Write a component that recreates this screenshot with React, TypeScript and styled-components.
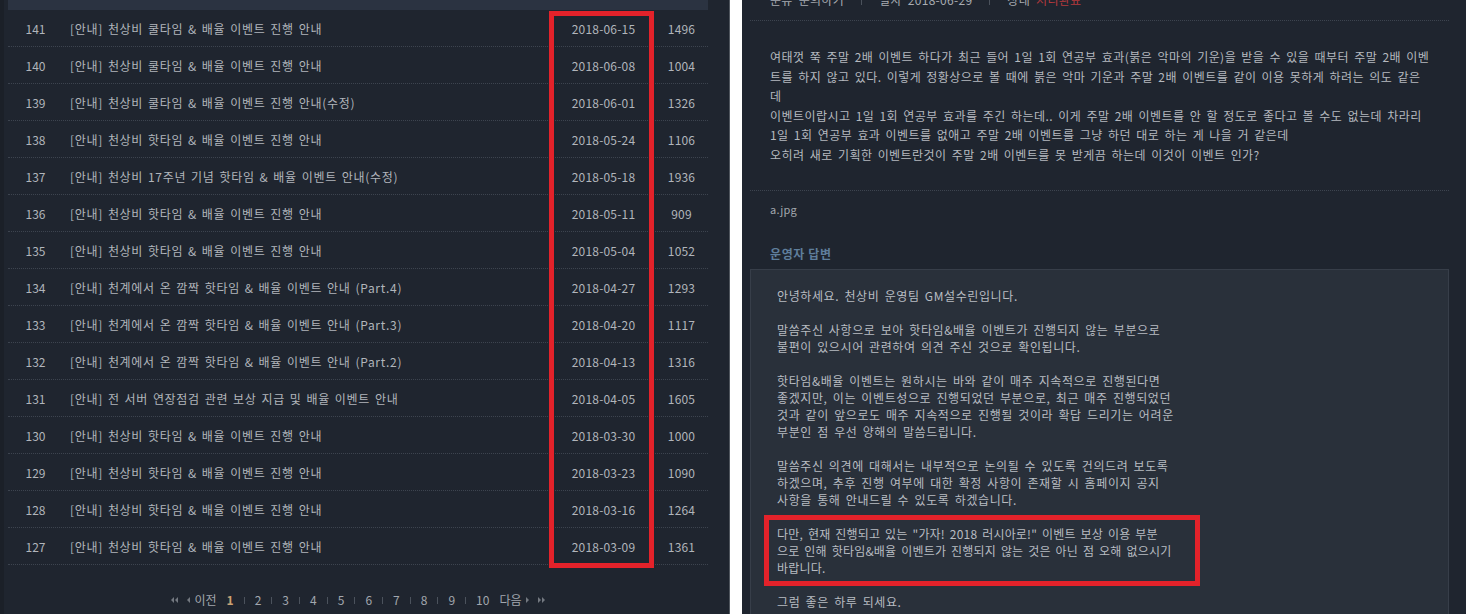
import React from "react";
import styled, { createGlobalStyle } from "styled-components";

const GlobalStyle = createGlobalStyle`
  html, body { margin: 0; padding: 0; background: #ffffff; overflow: hidden; }
  body { font-family: "Noto Sans CJK KR", "Noto Sans", sans-serif; }
  * { box-sizing: border-box; }
`;

const Page = styled.div`
  display: flex;
  gap: 12px;
  height: 614px;
  overflow: hidden;
`;

const ListPanel = styled.section`
  width: 730px;
  flex: none;
  background: #1f252f;
  border-left: 4px solid #1b2028;
  border-right: 1px solid #50565e;
  padding: 0 21px 0 4px;
  display: flex;
  flex-direction: column;
  & > * { flex-shrink: 0; }
`;

const TableWrap = styled.div`
  position: relative;
`;

const HeadBar = styled.div`
  height: 10px;
  background: #2b3341;
`;

const Row = styled.div`
  display: grid;
  grid-template-columns: 55px 489px 103px 53px;
  align-items: center;
  height: 37px;
  border-bottom: 1px dotted #3d444f;
  font-size: 12px;
  color: #b1b5bb;
`;

const Num = styled.span`
  text-align: center;
`;

const Title = styled.span`
  padding-left: 7px;
  white-space: nowrap;
  letter-spacing: 0.7px;
  word-spacing: 1.5px;
`;

const Center = styled.span`
  text-align: center;
  letter-spacing: 0.2px;
`;

const DateMark = styled.div`
  position: absolute;
  left: 541px;
  top: 11px;
  width: 105px;
  height: 557px;
  border: 5px solid #e3222a;
  pointer-events: none;
`;

const Pager = styled.nav`
  display: flex;
  justify-content: center;
  align-items: center;
  gap: 9px;
  padding-top: 28px;
  font-size: 12px;
  line-height: 14px;
  color: #a2a7ae;
`;

const PageNum = styled.span<{ $active?: boolean }>`
  color: ${(p) => (p.$active ? "#c9a274" : "#a2a7ae")};
  font-weight: ${(p) => (p.$active ? 700 : 400)};
  padding: 0 1px;
`;

const PagerSep = styled.span`
  width: 1px;
  height: 7px;
  background: #4b525c;
`;

const PagerLink = styled.span`
  display: inline-flex;
  align-items: center;
  gap: 5px;
`;

const ArrowIcon = styled.svg`
  display: block;
  fill: #737880;
`;

const PostPanel = styled.section`
  flex: 1;
  background: #1f252f;
  padding: 0 17px 0 8px;
  min-width: 0;
  overflow: hidden;
`;

const MetaRow = styled.div`
  margin-top: -7px;
  height: 28px;
  display: flex;
  align-items: flex-start;
  padding-left: 20px;
  font-size: 12px;
  line-height: 14px;
  color: #a8acb2;
  border-bottom: 1px dotted #3d444f;
  gap: 17px;
  letter-spacing: 0.3px;
`;

const MetaItem = styled.span`
  display: inline-flex;
  gap: 6px;
  white-space: nowrap;
`;

const MetaValue = styled.span<{ $alert?: boolean }>`
  color: ${(p) => (p.$alert ? "#b4393d" : "#a8acb2")};
`;

const MetaSep = styled.span`
  width: 1px;
  height: 12px;
  background: #4b525c;
`;

const QuestionBody = styled.div`
  padding: 26px 0 25px 20px;
  font-size: 12px;
  line-height: 19.6px;
  color: #b5b9bf;
  border-bottom: 1px dotted #3d444f;
  letter-spacing: 0.45px;
  word-spacing: 2.1px;
`;

const Line = styled.div`
  white-space: nowrap;
`;

const Attachment = styled.div`
  padding: 11px 0 0 20px;
  font-size: 11px;
  line-height: 14px;
  color: #a3a8ae;
  letter-spacing: 0.3px;
`;

const AnswerHeading = styled.h3`
  margin: 0;
  padding: 31px 0 0 20px;
  height: 53px;
  font-size: 12px;
  line-height: 14px;
  font-weight: 700;
  color: #5f7e9c;
  letter-spacing: 0.6px;
`;

const AnswerBox = styled.div`
  background: #29303a;
  border: 1px solid #373e49;
  border-bottom: none;
  padding: 17px 0 40px 26px;
  font-size: 12px;
  line-height: 17px;
  color: #b8bcc2;
  letter-spacing: 0.6px;
  word-spacing: 2px;
`;

const Para = styled.p`
  margin: 0 0 17px;
`;

const HighlightPara = styled.p`
  width: 436px;
  margin: -9.5px 0 6.5px -13px;
  padding: 4.5px 8px 5.5px 8px;
  border: 5px solid #e3222a;
  letter-spacing: 0.2px;
`;

type Post = [number, string, string, number];

const posts: Post[] = [
  [141, "[안내] 천상비 쿨타임 & 배율 이벤트 진행 안내", "2018-06-15", 1496],
  [140, "[안내] 천상비 쿨타임 & 배율 이벤트 진행 안내", "2018-06-08", 1004],
  [139, "[안내] 천상비 쿨타임 & 배율 이벤트 진행 안내(수정)", "2018-06-01", 1326],
  [138, "[안내] 천상비 핫타임 & 배율 이벤트 진행 안내", "2018-05-24", 1106],
  [137, "[안내] 천상비 17주년 기념 핫타임 & 배율 이벤트 안내(수정)", "2018-05-18", 1936],
  [136, "[안내] 천상비 핫타임 & 배율 이벤트 진행 안내", "2018-05-11", 909],
  [135, "[안내] 천상비 핫타임 & 배율 이벤트 진행 안내", "2018-05-04", 1052],
  [134, "[안내] 천계에서 온 깜짝 핫타임 & 배율 이벤트 안내 (Part.4)", "2018-04-27", 1293],
  [133, "[안내] 천계에서 온 깜짝 핫타임 & 배율 이벤트 안내 (Part.3)", "2018-04-20", 1117],
  [132, "[안내] 천계에서 온 깜짝 핫타임 & 배율 이벤트 안내 (Part.2)", "2018-04-13", 1316],
  [131, "[안내] 전 서버 연장점검 관련 보상 지급 및 배율 이벤트 안내", "2018-04-05", 1605],
  [130, "[안내] 천상비 핫타임 & 배율 이벤트 진행 안내", "2018-03-30", 1000],
  [129, "[안내] 천상비 핫타임 & 배율 이벤트 진행 안내", "2018-03-23", 1090],
  [128, "[안내] 천상비 핫타임 & 배율 이벤트 진행 안내", "2018-03-16", 1264],
  [127, "[안내] 천상비 핫타임 & 배율 이벤트 진행 안내", "2018-03-09", 1361],
];

const questionLines = [
  "여태껏 쭉 주말 2배 이벤트 하다가 최근 들어 1일 1회 연공부 효과(붉은 악마의 기운)을 받을 수 있을 때부터 주말 2배 이벤",
  "트를 하지 않고 있다. 이렇게 정황상으로 볼 때에 붉은 악마 기운과 주말 2배 이벤트를 같이 이용 못하게 하려는 의도 같은",
  "데",
  "이벤트이랍시고 1일 1회 연공부 효과를 주긴 하는데.. 이게 주말 2배 이벤트를 안 할 정도로 좋다고 볼 수도 없는데 차라리",
  "1일 1회 연공부 효과 이벤트를 없애고 주말 2배 이벤트를 그냥 하던 대로 하는 게 나을 거 같은데",
  "오히려 새로 기획한 이벤트란것이 주말 2배 이벤트를 못 받게끔 하는데 이것이 이벤트 인가?",
];

const Lines = ({ lines }: { lines: string[] }) => (
  <>
    {lines.map((l, i) => (
      <Line key={i}>{l}</Line>
    ))}
  </>
);

const FirstIcon = () => (
  <ArrowIcon width="7" height="6" viewBox="0 0 7 6">
    <polygon points="3,0 3,6 0,3" />
    <polygon points="7,0 7,6 4,3" />
  </ArrowIcon>
);
const PrevIcon = () => (
  <ArrowIcon width="3" height="6" viewBox="0 0 3 6">
    <polygon points="3,0 3,6 0,3" />
  </ArrowIcon>
);
const NextIcon = () => (
  <ArrowIcon width="3" height="6" viewBox="0 0 3 6">
    <polygon points="0,0 0,6 3,3" />
  </ArrowIcon>
);
const LastIcon = () => (
  <ArrowIcon width="7" height="6" viewBox="0 0 7 6">
    <polygon points="0,0 0,6 3,3" />
    <polygon points="4,0 4,6 7,3" />
  </ArrowIcon>
);

export default function App() {
  const pages = [1, 2, 3, 4, 5, 6, 7, 8, 9, 10];
  return (
    <>
      <GlobalStyle />
      <Page>
        <ListPanel>
          <TableWrap>
            <HeadBar />
            {posts.map(([n, t, d, v]) => (
              <Row key={n}>
                <Num>{n}</Num>
                <Title>{t}</Title>
                <Center>{d}</Center>
                <Center>{v}</Center>
              </Row>
            ))}
            <DateMark />
          </TableWrap>
          <Pager>
            <FirstIcon />
            <PagerLink>
              <PrevIcon />
              이전
            </PagerLink>
            {pages.map((p, i) => (
              <React.Fragment key={p}>
                {i > 0 && <PagerSep />}
                <PageNum $active={p === 1}>{p}</PageNum>
              </React.Fragment>
            ))}
            <PagerLink>
              다음
              <NextIcon />
            </PagerLink>
            <LastIcon />
          </Pager>
        </ListPanel>
        <PostPanel>
          <MetaRow>
            <MetaItem>
              분류<MetaValue>문의하기</MetaValue>
            </MetaItem>
            <MetaSep />
            <MetaItem>
              일자<MetaValue>2018-06-29</MetaValue>
            </MetaItem>
            <MetaSep />
            <MetaItem>
              상태<MetaValue $alert>처리완료</MetaValue>
            </MetaItem>
          </MetaRow>
          <QuestionBody>
            <Lines lines={questionLines} />
          </QuestionBody>
          <Attachment>a.jpg</Attachment>
          <AnswerHeading>운영자 답변</AnswerHeading>
          <AnswerBox>
            <Para>안녕하세요. 천상비 운영팀 GM설수린입니다.</Para>
            <Para>
              <Lines
                lines={[
                  "말씀주신 사항으로 보아 핫타임&배율 이벤트가 진행되지 않는 부분으로",
                  "불편이 있으시어 관련하여 의견 주신 것으로 확인됩니다.",
                ]}
              />
            </Para>
            <Para>
              <Lines
                lines={[
                  "핫타임&배율 이벤트는 원하시는 바와 같이 매주 지속적으로 진행된다면",
                  "좋겠지만, 이는 이벤트성으로 진행되었던 부분으로, 최근 매주 진행되었던",
                  "것과 같이 앞으로도 매주 지속적으로 진행될 것이라 확답 드리기는 어려운",
                  "부분인 점 우선 양해의 말씀드립니다.",
                ]}
              />
            </Para>
            <Para>
              <Lines
                lines={[
                  "말씀주신 의견에 대해서는 내부적으로 논의될 수 있도록 건의드려 보도록",
                  "하겠으며, 추후 진행 여부에 대한 확정 사항이 존재할 시 홈페이지 공지",
                  "사항을 통해 안내드릴 수 있도록 하겠습니다.",
                ]}
              />
            </Para>
            <HighlightPara>
              <Lines
                lines={[
                  "다만, 현재 진행되고 있는 \"가자! 2018 러시아로!\" 이벤트 보상 이용 부분",
                  "으로 인해 핫타임&배율 이벤트가 진행되지 않는 것은 아닌 점 오해 없으시기",
                  "바랍니다.",
                ]}
              />
            </HighlightPara>
            <Para>그럼 좋은 하루 되세요.</Para>
          </AnswerBox>
        </PostPanel>
      </Page>
    </>
  );
}
